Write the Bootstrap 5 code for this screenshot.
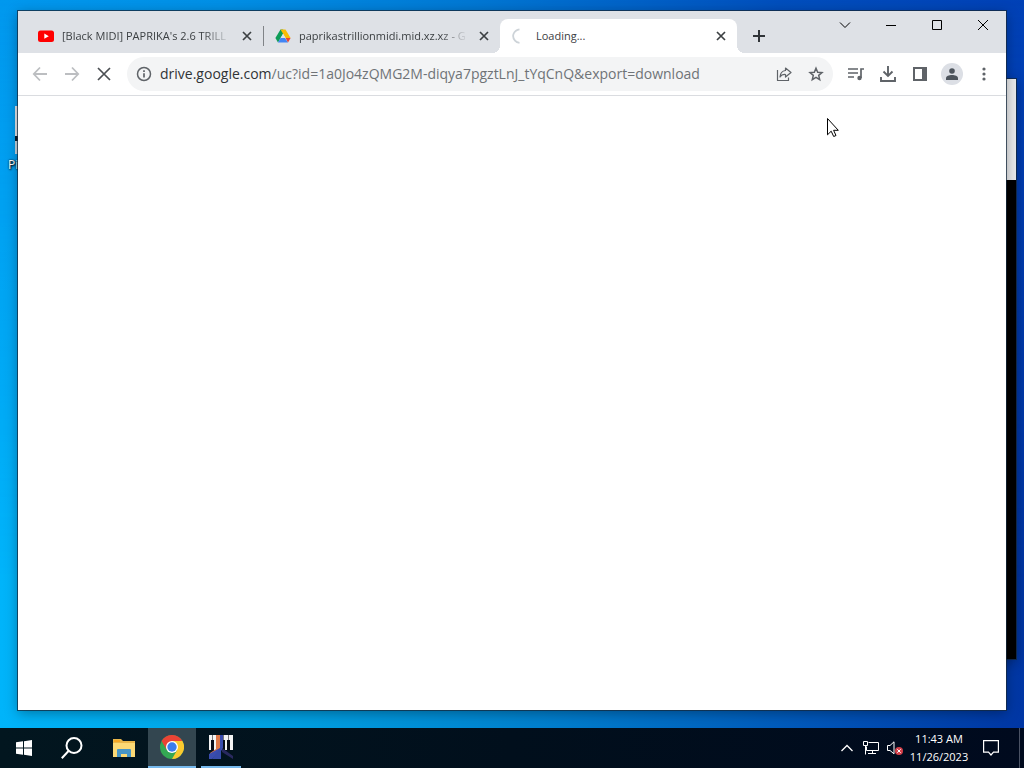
<!DOCTYPE html>
<html lang="en">
<head>
<meta charset="utf-8">
<meta name="viewport" content="width=device-width, initial-scale=1">
<title>Loading...</title>
<link href="https://cdn.jsdelivr.net/npm/bootstrap@5.3.0/dist/css/bootstrap.min.css" rel="stylesheet">
<style>
  body { font-family: "Open Sans", "Noto Sans", sans-serif; font-size: 12px; line-height: 18px; }
  button { border: 0; padding: 0; background: none; color: inherit; }
  svg { display: block; flex: none; }

  /* Desktop and windows */
  .desktop { background: linear-gradient(97deg, #0098ee 0%, #0090e6 20%, #0078d4 42%, #004fbd 70%, #003cb4 100%); }
  .desk-glow { inset: 0; background: linear-gradient(90deg, #00b4fa 0%, #00a4e4 25%, #0084d0 50%, #0058ba 78%, #0036a4 100%); -webkit-mask-image: linear-gradient(transparent, #000 80%); mask-image: linear-gradient(transparent, #000 80%); }
  .shortcut { left: 8px; top: 106px; color: #fff; text-shadow: 1px 1px 2px #000, 0 0 2px #000; }
  .shortcut-art { width: 48px; height: 48px; margin: 0 0 2px 7px; background: linear-gradient(#e3e6ea 0 30px, #0a1a28 30px 35px, #c5d5e0 35px); }
  .win { box-shadow: 0 0 0 1px rgba(20,40,60,.75), 0 3px 12px rgba(0,0,0,.35); }
  .win-back { inset: 79px 8px 69px 60px; background: #000; }
  .win-back-head { height: 101px; background: #e9eaec; }
  .win-front { inset: 11px 18px 18px 18px; background: #fff; }

  /* Tab strip */
  .titlebar { height: 42px; background: #dee1e6; color: #3c4043; }
  .tab { flex: 0 1 237px; min-width: 0; height: 34px; padding: 0 8px 0 12px; position: relative; }
  .tab-rule { border-left: 1px solid #808387; height: 20px; margin-right: -1px; }
  .tab-on { background: #fff; border-radius: 8px 8px 0 0; }
  .tab-on::before, .tab-on::after { content: ""; position: absolute; bottom: 0; width: 8px; height: 8px; }
  .tab-on::before { right: 100%; background: radial-gradient(circle at 0 0, transparent 8px, #fff 8px); }
  .tab-on::after { left: 100%; background: radial-gradient(circle at 100% 0, transparent 8px, #fff 8px); }
  .tab-name { overflow: hidden; white-space: nowrap; flex: 1 1 0; min-width: 0; font-size: 11px; }
  .fade-end { -webkit-mask-image: linear-gradient(90deg, #000 calc(100% - 28px), transparent); mask-image: linear-gradient(90deg, #000 calc(100% - 28px), transparent); }
  .winbtn { width: 46px; height: 28px; color: #000; }

  /* Toolbar */
  .toolbar { height: 43px; padding: 0 6px; border-bottom: 1px solid #dadce0; color: #5f6368; }
  .tool { width: 32px; height: 32px; flex: none; display: flex; align-items: center; justify-content: center; }
  .tool-off { color: #bcbec1; }
  .omnibox { height: 34px; border-radius: 17px; background: #f3f4f5; margin: 0 7px; padding: 0 1px 0 9px; min-width: 0; }
  .address { font-size: 14px; line-height: 20px; color: #6f7377; white-space: nowrap; overflow: hidden; outline: 0; }
  .address span { color: #303336; }
  .avatar { width: 22px; height: 22px; border-radius: 50%; background: #dcdfe5; }
  .pointer { left: 827px; top: 118px; }

  /* Taskbar */
  .taskbar { height: 40px; background: linear-gradient(90deg, #02161f, #010f1c 50%, #000a1e); color: #fff; }
  .task { width: 48px; height: 40px; display: flex; align-items: center; justify-content: center; }
  .task-on { background: #334650; border-bottom: 2px solid #76b9ed; }
  .task-run { width: 40px; border-bottom: 2px solid #76b9ed; margin-left: 5px; }
  .tray { width: 24px; height: 40px; display: flex; align-items: center; justify-content: center; }
  .tray-note { width: 40px; }
  .clock { width: 64px; font-size: 11px; }
  .peek { width: 5px; height: 40px; border-left: 1px solid #4a5264; }
</style>
</head>
<body class="vh-100 d-flex flex-column overflow-hidden">
<main class="desktop flex-grow-1 position-relative overflow-hidden">
  <div class="desk-glow position-absolute"></div>
  <div class="shortcut position-absolute"><div class="shortcut-art"></div><div>Pi</div></div>
  <section class="win win-back position-absolute"><div class="win-back-head"></div></section>

  <section class="win win-front position-absolute d-flex flex-column">
    <header class="titlebar d-flex align-items-start">
      <nav class="d-flex flex-grow-1 pt-2 ps-2 align-items-center" aria-label="Tabs">
        <div class="tab d-flex align-items-center gap-2">
          <svg width="16" height="16" viewBox="0 0 16 16"><rect y="2.500" width="16" height="11.500" rx="2.500" fill="#f00"/><path d="M6.300 5.600l4.500 2.600-4.500 2.600z" fill="#fff"/></svg>
          <span class="tab-name fade-end">[Black MIDI] PAPRIKA's 2.6 TRILL</span>
          <button aria-label="Close tab"><svg width="16" height="16" viewBox="0 0 16 16" fill="none" stroke="#3c4043" stroke-width="1.700"><path d="M4 4l8 8M12 4l-8 8"/></svg></button>
        </div>
        <div class="tab-rule"></div>
        <div class="tab d-flex align-items-center gap-2">
          <svg width="16" height="16" viewBox="0 0 16 16"><path d="M5.500 1.500h2.500l1.300 2.200L3 14.400 .4 10z" fill="#0f9d58"/><path d="M5.500 1.500h5l5.100 8.500h-5z" fill="#fbbc04"/><path d="M3 14.400L5.600 10H10l3 4.400z" fill="#4285f4"/><path d="M10.600 10h5L13 14.400z" fill="#ea4335"/><path d="M8 5.800L5.600 10h4.900z" fill="#dee1e6"/></svg>
          <span class="tab-name fade-end">paprikastrillionmidi.mid.xz.xz - G</span>
          <button aria-label="Close tab"><svg width="16" height="16" viewBox="0 0 16 16" fill="none" stroke="#3c4043" stroke-width="1.700"><path d="M4 4l8 8M12 4l-8 8"/></svg></button>
        </div>
        <div class="tab tab-on d-flex align-items-center gap-2">
          <svg width="16" height="16" viewBox="0 0 16 16" fill="none" stroke="#cdd3d8" stroke-width="1.800"><path d="M7.500 1.300C2 2 -1 8 3 12.600c1 1.200 2.500 2 4.500 2.200"/></svg>
          <span class="tab-name">Loading...</span>
          <button aria-label="Close tab"><svg width="16" height="16" viewBox="0 0 16 16" fill="none" stroke="#3c4043" stroke-width="1.700"><path d="M4 4l8 8M12 4l-8 8"/></svg></button>
        </div>
        <button class="ms-3" aria-label="New tab"><svg width="12" height="12" viewBox="0 0 12 12" stroke="#303438" stroke-width="2"><path d="M6 0v12M0 6h12"/></svg></button>
      </nav>
      <button class="winbtn" aria-label="Search tabs"><svg class="mx-auto" width="12" height="12" viewBox="0 0 12 12" fill="none" stroke="currentColor"><path d="M1 3.500l5 5 5-5"/></svg></button>
      <button class="winbtn" aria-label="Minimize"><svg class="mx-auto" width="12" height="12" viewBox="0 0 12 12" stroke="currentColor"><path d="M1 6.500h10"/></svg></button>
      <button class="winbtn" aria-label="Maximize"><svg class="mx-auto" width="12" height="12" viewBox="0 0 12 12" fill="none" stroke="currentColor"><path d="M1.500 1.500h9v9h-9z"/></svg></button>
      <button class="winbtn" aria-label="Close"><svg class="mx-auto" width="12" height="12" viewBox="0 0 12 12" stroke="currentColor"><path d="M1 1l10 10M11 1L1 11"/></svg></button>
    </header>

    <div class="toolbar d-flex align-items-center">
      <button class="tool tool-off" aria-label="Back"><svg width="16" height="16" viewBox="0 0 16 16" fill="none" stroke="currentColor" stroke-width="1.800"><path d="M15 8H2M8 1.500L1.800 8 8 14.500"/></svg></button>
      <button class="tool tool-off" aria-label="Forward"><svg width="16" height="16" viewBox="0 0 16 16" fill="none" stroke="currentColor" stroke-width="1.800"><path d="M1 8h13M8 1.500L14.200 8 8 14.500"/></svg></button>
      <button class="tool" aria-label="Stop"><svg width="16" height="16" viewBox="0 0 16 16" fill="none" stroke="#4b4f53" stroke-width="1.700"><path d="M2 2l12 12M14 2L2 14"/></svg></button>
      <div class="omnibox d-flex flex-grow-1 align-items-center">
        <button aria-label="Site information"><svg width="16" height="16" viewBox="0 0 16 16" fill="none" stroke="#5f6368" stroke-width="1.500"><circle cx="8" cy="8" r="6.500"/><path d="M8 7.200v4.300M8 4.300v1.600" stroke-width="1.700"/></svg></button>
        <div class="address flex-grow-1 ms-2" role="textbox" aria-label="Address" contenteditable="true" spellcheck="false"><span>drive.google.com</span>/uc?id=1a0Jo4zQMG2M-diqya7pgztLnJ_tYqCnQ&amp;export=download</div>
        <button class="tool" aria-label="Share"><svg width="16" height="16" viewBox="0 0 16 16" fill="none" stroke="currentColor" stroke-width="1.200" stroke-linejoin="round"><path d="M1.500 4v10.500h11V11.500M9.500 2l5.500 4.500-5.500 4.500V8.500C7 8.300 5.200 9 4 11c.2-3.500 2-6 5.500-6.500z"/></svg></button>
        <button class="tool" aria-label="Bookmark"><svg width="16" height="16" viewBox="0 0 16 16" fill="none" stroke="currentColor" stroke-width="1.500"><path d="M8 2.200l1.700 4 4.300.4-3.300 2.800 1 4.300L8 11.400l-3.700 2.300 1-4.300L2 6.600l4.300-.4z"/></svg></button>
      </div>
      <button class="tool" aria-label="Media controls"><svg width="16" height="16" viewBox="0 0 16 16" fill="none" stroke="currentColor" stroke-width="1.700"><path d="M0 3h10M0 7h10M0 11h6M13 12V3h3.500"/><circle cx="11.500" cy="12" r="2.200" fill="currentColor" stroke="none"/></svg></button>
      <button class="tool" aria-label="Downloads"><svg width="16" height="16" viewBox="0 0 16 16" fill="none" stroke="currentColor" stroke-width="1.900"><path d="M8 0v9.500M3.500 5.500L8 10l4.500-4.500M1 11v4h14v-4"/></svg></button>
      <button class="tool" aria-label="Side panel"><svg width="14" height="14" viewBox="0 0 14 14"><path d="M1 1h12v12H1z" fill="none" stroke="currentColor" stroke-width="2"/><path d="M9 1h5v12H9z" fill="currentColor"/></svg></button>
      <button class="tool" aria-label="Profile"><span class="avatar d-flex align-items-center justify-content-center"><svg width="12" height="12" viewBox="0 0 12 12" fill="#4d545c"><circle cx="6" cy="3" r="2.800"/><path d="M0 12v-1.800C0 8 3 7 6 7s6 1 6 3.200V12z"/></svg></span></button>
      <button class="tool" aria-label="Menu"><svg width="16" height="16" viewBox="0 0 16 16" fill="currentColor"><circle cx="8" cy="3" r="1.600"/><circle cx="8" cy="8" r="1.600"/><circle cx="8" cy="13" r="1.600"/></svg></button>
    </div>
    <div class="flex-grow-1"></div>
  </section>
  <svg class="pointer position-absolute" width="12" height="19" viewBox="0 0 12 19"><path d="M.5.5v16.300l3.700-3.600 2.500 5.300 2.300-1-2.400-5.200h4.700z" fill="#fff" stroke="#000"/></svg>
</main>

<footer class="taskbar d-flex align-items-center flex-shrink-0">
  <button class="task" aria-label="Start"><svg width="16" height="16" viewBox="0 0 16 16" fill="#fff"><path d="M0 2.300l7-1v6.200H0zM8 1.200L16 0v7.500H8zM0 8.500h7v6.200l-7-1zM8 8.500h8V16l-8-1.200z"/></svg></button>
  <button class="task" aria-label="Search"><svg width="22" height="22" viewBox="0 0 22 22" fill="none" stroke="#fff" stroke-width="2"><circle cx="13" cy="8.500" r="7.500"/><path d="M7.500 14L.8 21.200"/></svg></button>
  <button class="task ms-1" aria-label="File Explorer"><svg width="22" height="20" viewBox="0 0 22 20"><path d="M0 1h8l2 2h12v16H0z" fill="#e9b64a"/><path d="M0 5h22v14H0z" fill="#fcd975"/><path d="M1 2h6v2H1z" fill="#f5a623"/><path d="M4 19v-7q0-1 1-1h12q1 0 1 1v7h-4v-3H8v3z" fill="#4795c6"/></svg></button>
  <button class="task task-on" aria-label="Chrome"><svg width="24" height="24" viewBox="0 0 24 24"><circle cx="12" cy="12" r="12" fill="#34a853"/><path d="M12 12L1.600 6A12 12 0 0 1 22.400 6z" fill="#ea4335"/><path d="M1.600 6L6.800 15 12 6z" fill="#ea4335"/><path d="M12 6h10.400A12 12 0 0 1 12 24l5.200-9z" fill="#fbc92f"/><circle cx="12" cy="12" r="6" fill="#fff"/><circle cx="12" cy="12" r="4.700" fill="#3b7ded"/></svg></button>
  <button class="task task-run" aria-label="Piano"><svg width="24" height="24" viewBox="0 0 24 24"><path d="M0 0h24v15H0z" fill="#f4f4f4"/><path d="M2 5h3v11H2zM8 5h2v11H8zM13 5h3v11h-3zM18 5h3v11h-3z" fill="#080c18"/><path d="M3.500 0v5M14.500 0v5M19.500 0v5" stroke="#777"/><path d="M7 0h4v16L1 24v-6l6-4z" fill="#df7848"/><path d="M11 0h3v14L3 24H0v-5l11-6z" fill="#3a4cae"/><path d="M12 12v12H3z" fill="#364aa9"/><path d="M13 13l11 8v3l-11-7z" fill="#29295f"/></svg></button>

  <button class="tray ms-auto" aria-label="Show hidden icons"><svg width="12" height="12" viewBox="0 0 12 12" fill="none" stroke="#fff" stroke-width="1.300"><path d="M.5 9L6 3.500 11.500 9"/></svg></button>
  <button class="tray" aria-label="Network"><svg width="16" height="14" viewBox="0 0 16 14" fill="none" stroke="#fff"><path d="M5.500 1.500h10v8H3.500v-4M.5.500h4v4h-4zM2.500 4.500v9M9.500 9.500v3M5 12.500h8"/></svg></button>
  <button class="tray" aria-label="Volume muted"><svg width="16" height="14" viewBox="0 0 16 14" fill="none"><path d="M.5 4.500H3l4-3.700v12L3 9.500H.5z" stroke="#fff"/><circle cx="12" cy="10" r="4" fill="#d3404a"/><path d="M10.300 8.300l3.400 3.400M13.700 8.300l-3.400 3.400" stroke="#fff"/></svg></button>
  <div class="clock text-center">11:43 AM<br>11/26/2023</div>
  <button class="tray tray-note me-2" aria-label="Notifications"><svg width="16" height="16" viewBox="0 0 16 16" fill="none" stroke="#fff" stroke-width="1.200"><path d="M.6.6h14.800v11.600H10.500L8 15l-2.500-2.800H.6z"/></svg></button>
  <div class="peek"></div>
</footer>
<script src="https://cdn.jsdelivr.net/npm/bootstrap@5.3.0/dist/js/bootstrap.bundle.min.js"></script>
</body>
</html>
